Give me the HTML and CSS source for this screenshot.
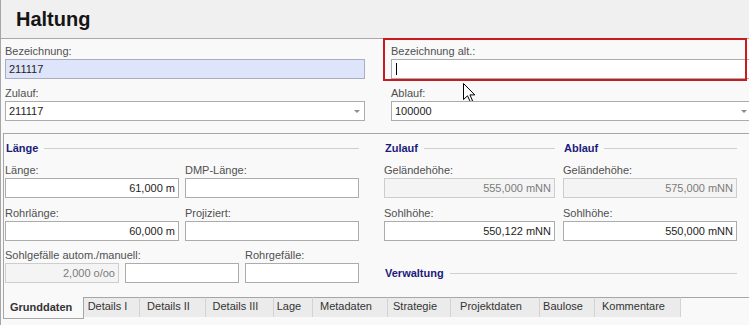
FILE: index.html
```html
<!DOCTYPE html>
<html lang="de">
<head>
  <meta charset="UTF-8" />
  <title>Haltung</title>
  <link rel="stylesheet" href="styles.css">
</head>
<body>
  <div class="page">
    <div class="head">
      <h1>Haltung</h1>
    </div>

    <div class="top">
      <div class="field">
        <label>Bezeichnung:</label>
        <div class="box key">211117</div>
      </div>
      <div class="field">
        <label>Bezeichnung alt.:</label>
        <div class="box"><span class="caret"></span></div>
        <span class="highlight"></span>
        <svg class="pointer" width="13" height="20" viewBox="0 0 13 20">
          <path d="M0.5 0.5 L0.5 16.5 L4.5 12.8 L7.3 18.8 L9.6 17.8 L6.9 11.9 L11.8 11.9 Z" fill="#fff" stroke="#000" stroke-width="1" stroke-linejoin="miter"/>
        </svg>
      </div>
      <div class="field">
        <label>Zulauf:</label>
        <div class="box combo">211117<span class="arrow"></span></div>
      </div>
      <div class="field">
        <label>Ablauf:</label>
        <div class="box combo">100000<span class="arrow"></span></div>
      </div>
    </div>

    <div class="panel">
      <div class="panel-body">
        <div class="block block-left">
          <div class="section">Länge</div>
          <div class="grid2">
            <div class="field">
              <label>Länge:</label>
              <div class="box num">61,000 m</div>
            </div>
            <div class="field">
              <label>DMP-Länge:</label>
              <div class="box"></div>
            </div>
            <div class="field">
              <label>Rohrlänge:</label>
              <div class="box num">60,000 m</div>
            </div>
            <div class="field">
              <label>Projiziert:</label>
              <div class="box"></div>
            </div>
          </div>
          <div class="grid3">
            <label class="wide">Sohlgefälle autom./manuell:</label>
            <label>Rohrgefälle:</label>
            <div class="box num off">2,000 o/oo</div>
            <div class="box"></div>
            <div class="box"></div>
          </div>
        </div>

        <div class="block block-right">
          <div class="cols">
            <div class="col col-in">
              <div class="section">Zulauf</div>
              <div class="field">
                <label>Geländehöhe:</label>
                <div class="box num off">555,000 mNN</div>
              </div>
              <div class="field">
                <label>Sohlhöhe:</label>
                <div class="box num">550,122 mNN</div>
              </div>
            </div>
            <div class="col col-out">
              <div class="section">Ablauf</div>
              <div class="field">
                <label>Geländehöhe:</label>
                <div class="box num off">575,000 mNN</div>
              </div>
              <div class="field">
                <label>Sohlhöhe:</label>
                <div class="box num">550,000 mNN</div>
              </div>
            </div>
          </div>
          <div class="section section-admin">Verwaltung</div>
        </div>
      </div>

      <div class="tabs">
        <div class="tab active">Grunddaten</div>
        <div class="tab">Details I</div>
        <div class="tab">Details II</div>
        <div class="tab">Details III</div>
        <div class="tab">Lage</div>
        <div class="tab">Metadaten</div>
        <div class="tab">Strategie</div>
        <div class="tab">Projektdaten</div>
        <div class="tab">Baulose</div>
        <div class="tab">Kommentare</div>
        <div class="tab-rest"></div>
      </div>
    </div>

    <div class="lower"></div>
  </div>
</body>
</html>
```

FILE: styles.css
```css
body {
  margin: 0;
  font-family: 'Liberation Sans', Arial, sans-serif;
  font-size: 11px;
  color: #222;
  background: #f9f9f9;
  overflow: hidden;
}
.page {
  width: 749px;
  height: 325px;
  box-sizing: border-box;
  border-left: 1px solid #a6a6a6;
  overflow: hidden;
}
.head {
  height: 39px;
  box-sizing: border-box;
  background: #f0f0f0;
  border-bottom: 1px solid #a9a9a9;
  padding: 7px 0 0 15px;
}
h1 {
  margin: 0;
  font-size: 20px;
  line-height: 24px;
  font-weight: bold;
  color: #151515;
}

/* top fields */
.top {
  display: grid;
  grid-template-columns: 360px 361px;
  column-gap: 26px;
  row-gap: 7px;
  padding: 5px 0 0 4px;
}
.field {
  position: relative;
  display: flex;
  flex-direction: column;
}
label {
  display: block;
  line-height: 15px;
  height: 15px;
  color: #505050;
  white-space: nowrap;
}
.box {
  height: 20px;
  box-sizing: border-box;
  border: 1px solid #acacac;
  background: #fff;
  padding: 0 3px;
  line-height: 18px;
  display: flex;
  align-items: center;
  color: #1e1e1e;
  white-space: nowrap;
}
.key {
  background: #dee4fa;
  border-color: #a9adbd;
}
.num {
  justify-content: flex-end;
}
.off {
  background: #f4f4f4;
  border-color: #cdcdcd;
  color: #7b7b7b;
}
.combo {
  padding-right: 4px;
}
.arrow {
  margin-left: auto;
  width: 0;
  height: 0;
  border-left: 3px solid transparent;
  border-right: 3px solid transparent;
  border-top: 3px solid #8c8c8c;
}
.caret {
  display: inline-block;
  width: 1px;
  height: 12px;
  background: #000;
  margin-left: 1px;
}
.highlight {
  position: absolute;
  left: -8px;
  top: -6px;
  width: 364px;
  height: 43px;
  box-sizing: border-box;
  border: 2px solid #c81a1f;
}
.pointer {
  position: absolute;
  left: 72px;
  top: 39px;
}

/* panel */
.panel {
  margin: 12px 0 0 2px;
  border-top: 1px solid #a6a6a6;
  border-left: 1px solid #a6a6a6;
}
.panel-body {
  display: flex;
  column-gap: 25px;
  padding: 7px 0 9px 1px;
}
.block {
  display: flex;
  flex-direction: column;
}
.block-left {
  width: 354px;
}
.block-right {
  width: 353px;
}
.section {
  display: flex;
  align-items: center;
  gap: 6px;
  height: 15px;
  line-height: 15px;
  padding-left: 1px;
  font-weight: bold;
  color: #1b1b7d;
  margin-bottom: 7px;
}
.section::after {
  content: "";
  flex: 1;
  border-top: 1px solid #cfcfcf;
}
.grid2 {
  display: grid;
  grid-template-columns: 174px 174px;
  column-gap: 6px;
  row-gap: 8px;
}
.grid3 {
  display: grid;
  grid-template-columns: 114px 114px 114px;
  column-gap: 6px;
  margin-top: 7px;
}
.grid3 .wide {
  grid-column: span 2;
}
.cols {
  display: flex;
  column-gap: 8px;
}
.col {
  display: flex;
  flex-direction: column;
  row-gap: 8px;
}
.col .section {
  margin-bottom: -1px;
}
.col-in {
  width: 171px;
}
.col-out {
  width: 174px;
}
.section-admin {
  margin-top: 25px;
}

/* tabs */
.tabs {
  display: flex;
  align-items: flex-start;
  height: 22px;
}
.tab {
  height: 20px;
  box-sizing: border-box;
  border-top: 1px solid #a6a6a6;
  border-right: 1px solid #d3d3d3;
  background: #ebebeb;
  line-height: 16px;
  color: #333;
  text-align: center;
  padding-right: 8px;
  white-space: nowrap;
}
.tab.active {
  width: 80px;
  height: 22px;
  border-top: none;
  border-right: 1px solid #a6a6a6;
  border-bottom: 1px solid #a6a6a6;
  background: #f9f9f9;
  font-weight: bold;
  line-height: 20px;
  text-align: left;
  padding: 0 0 0 6px;
}
.tab:nth-child(2) { width: 56px; }
.tab:nth-child(3) { width: 66px; }
.tab:nth-child(4) { width: 68px; }
.tab:nth-child(5) { width: 39px; }
.tab:nth-child(6) { width: 75px; }
.tab:nth-child(7) { width: 63px; }
.tab:nth-child(8) { width: 89px; }
.tab:nth-child(9) { width: 55px; }
.tab:nth-child(10) { width: 86px; }
.tab-rest {
  flex: 1;
  border-top: 1px solid #a6a6a6;
}
.lower {
  margin: 7px 0 0 2px;
  height: 10px;
  border-top: 1px solid #a6a6a6;
  border-left: 1px solid #a6a6a6;
}
```
